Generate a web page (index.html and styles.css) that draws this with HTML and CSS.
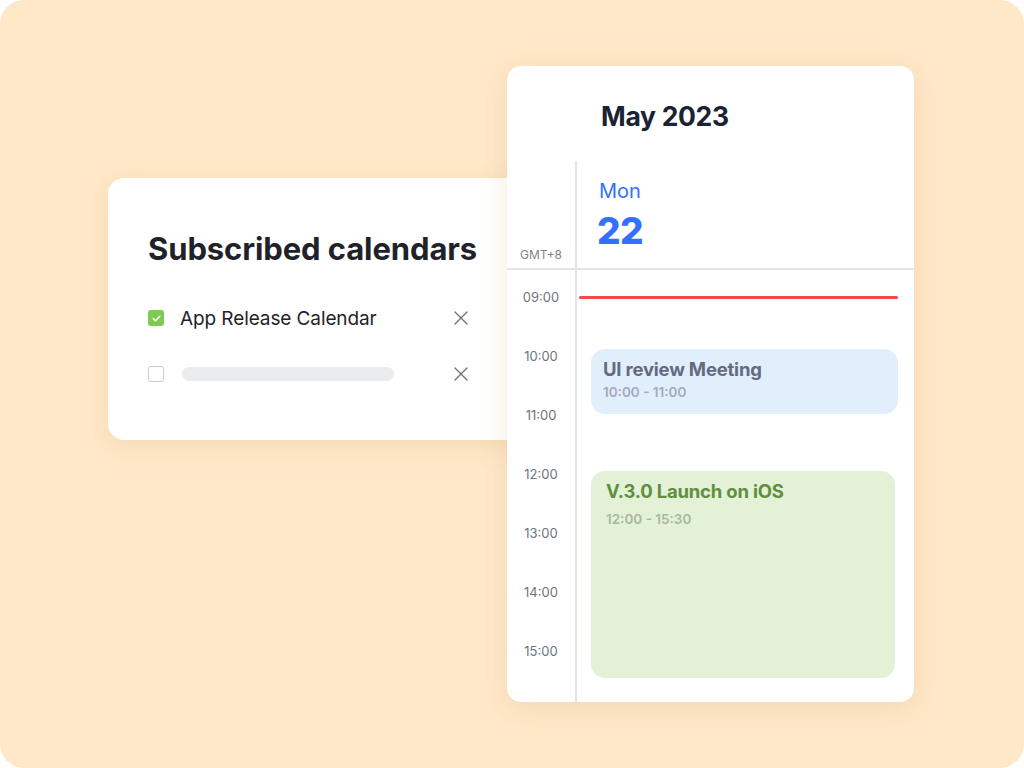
FILE: index.html
```html
<!DOCTYPE html>
<html>
<head>
<meta charset="utf-8">
<link rel="stylesheet" href="styles.css">
</head>
<body>
<div class="stage">
  <div class="sub-card">
    <h2 class="sub-title">Subscribed calendars</h2>
    <div class="sub-row">
      <span class="check on"><svg width="11" height="11" viewBox="0 0 11 11"><path d="M2.2 5.6 L4.5 7.8 L8.8 3.3" fill="none" stroke="#fff" stroke-width="1.6" stroke-linecap="round" stroke-linejoin="round"/></svg></span>
      <span class="sub-name">App Release Calendar</span>
      <svg class="close" width="14" height="14" viewBox="0 0 14 14"><path d="M1 1 L13 13 M13 1 L1 13" stroke="#6b6f76" stroke-width="1.3" stroke-linecap="round"/></svg>
    </div>
    <div class="sub-row">
      <span class="check off"></span>
      <span class="sub-bar"></span>
      <svg class="close" width="14" height="14" viewBox="0 0 14 14"><path d="M1 1 L13 13 M13 1 L1 13" stroke="#6b6f76" stroke-width="1.3" stroke-linecap="round"/></svg>
    </div>
  </div>

  <div class="cal-card">
    <div class="cal-month">May 2023</div>
    <div class="cal-head">
      <div class="tz">GMT+8</div>
      <div class="day">
        <div class="dow">Mon</div>
        <div class="dnum">22</div>
      </div>
    </div>
    <div class="cal-body">
      <div class="times">
        <div class="t">09:00</div>
        <div class="t">10:00</div>
        <div class="t">11:00</div>
        <div class="t">12:00</div>
        <div class="t">13:00</div>
        <div class="t">14:00</div>
        <div class="t">15:00</div>
      </div>
      <div class="lane">
        <div class="now"></div>
        <div class="ev ev-blue">
          <div class="ev-title">UI review Meeting</div>
          <div class="ev-time">10:00 - 11:00</div>
        </div>
        <div class="ev ev-green">
          <div class="ev-title">V.3.0 Launch on iOS</div>
          <div class="ev-time">12:00 - 15:30</div>
        </div>
      </div>
    </div>
  </div>
</div>
</body>
</html>
```

FILE: styles.css
```css
* { box-sizing: border-box; }
html, body { margin: 0; padding: 0; background: #ffffff; }
body { font-family: "Inter", "Lato", sans-serif; }

.stage {
  position: relative;
  width: 1024px;
  height: 768px;
  background: #ffe8c8;
  border-radius: 24px;
  overflow: hidden;
}

.sub-card {
  position: absolute;
  left: 108px;
  top: 178px;
  width: 420px;
  height: 262px;
  background: #ffffff;
  border-radius: 16px;
  box-shadow: 0 6px 24px rgba(180, 130, 60, 0.14);
  padding: 51px 0 0 40px;
}
.sub-title {
  margin: 0 0 34px 0;
  font-size: 31px;
  font-weight: 700;
  color: #1f2329;
  line-height: 40px;
  letter-spacing: -0.1px;
}
.sub-row {
  display: flex;
  align-items: center;
  height: 30px;
  margin-bottom: 26px;
  width: 320px;
}
.check {
  width: 16px;
  height: 16px;
  border-radius: 3px;
  flex: none;
  display: flex;
  align-items: center;
  justify-content: center;
}
.check.on { background: #7dcb50; }
.check.off { border: 1.5px solid #cbc8dc; background: #fff; }
.sub-name {
  margin-left: 16px;
  font-size: 19px;
  color: #1f2329;
  flex: 1;
  letter-spacing: -0.1px;
}
.sub-bar {
  margin-left: 18px;
  width: 212px;
  height: 14px;
  border-radius: 7px;
  background: #ebecee;
}
.close { margin-left: auto; flex: none; }

.cal-card {
  position: absolute;
  left: 507px;
  top: 66px;
  width: 407px;
  height: 636px;
  background: #ffffff;
  border-radius: 14px;
  box-shadow: 0 6px 28px rgba(180, 130, 60, 0.16);
  overflow: hidden;
  display: flex;
  flex-direction: column;
}
.cal-month {
  height: 95px;
  padding: 33px 0 0 94px;
  font-size: 26.5px;
  font-weight: 700;
  color: #1a2233;
  line-height: 34px;
  letter-spacing: -0.3px;
}
.cal-head {
  display: flex;
  height: 109px;
  border-bottom: 2px solid #e4e5e7;
}
.tz {
  width: 70px;
  flex: none;
  border-right: 2px solid #e4e5e7;
  font-size: 12px;
  color: #7f8287;
  display: flex;
  align-items: flex-end;
  justify-content: center;
  padding-bottom: 6px;
}
.day { padding: 16px 0 0 22px; }
.dow {
  font-size: 20px;
  color: #3370ff;
  line-height: 28px;
}
.dnum {
  font-size: 37px;
  font-weight: 800;
  color: #3370ff;
  line-height: 48px;
  margin-top: 2px;
  margin-left: -2px;
  letter-spacing: -0.5px;
}
.cal-body {
  display: flex;
  flex: 1;
}
.times {
  width: 70px;
  flex: none;
  border-right: 2px solid #e4e5e7;
  padding-top: 19px;
}
.t {
  height: 59px;
  line-height: 16px;
  font-size: 13px;
  color: #70747a;
  text-align: center;
  padding-left: 0;
}
.lane {
  position: relative;
  flex: 1;
}
.now {
  position: absolute;
  left: 2px;
  right: 16px;
  top: 26px;
  height: 3px;
  border-radius: 2px;
  background: #f54a45;
}
.ev {
  position: absolute;
  border-radius: 14px;
}
.ev-blue {
  left: 14px;
  right: 16px;
  top: 79px;
  height: 65px;
  background: #e1eefc;
  padding: 8px 0 0 12px;
}
.ev-blue .ev-title { color: #646a80; }
.ev-blue .ev-time { color: #a3abbd; margin-top: 2px; }
.ev-green {
  left: 14px;
  right: 19px;
  top: 201px;
  height: 207px;
  background: #e3f1d7;
  padding: 8px 0 0 15px;
}
.ev-green .ev-title { color: #5f8f3c; }
.ev-green .ev-time { color: #a7b99a; margin-top: 7px; }
.ev-title {
  font-size: 18.5px;
  font-weight: 700;
  line-height: 24px;
  letter-spacing: -0.2px;
}
.ev-time {
  font-size: 13.5px;
  font-weight: 600;
  line-height: 18px;
}
```
